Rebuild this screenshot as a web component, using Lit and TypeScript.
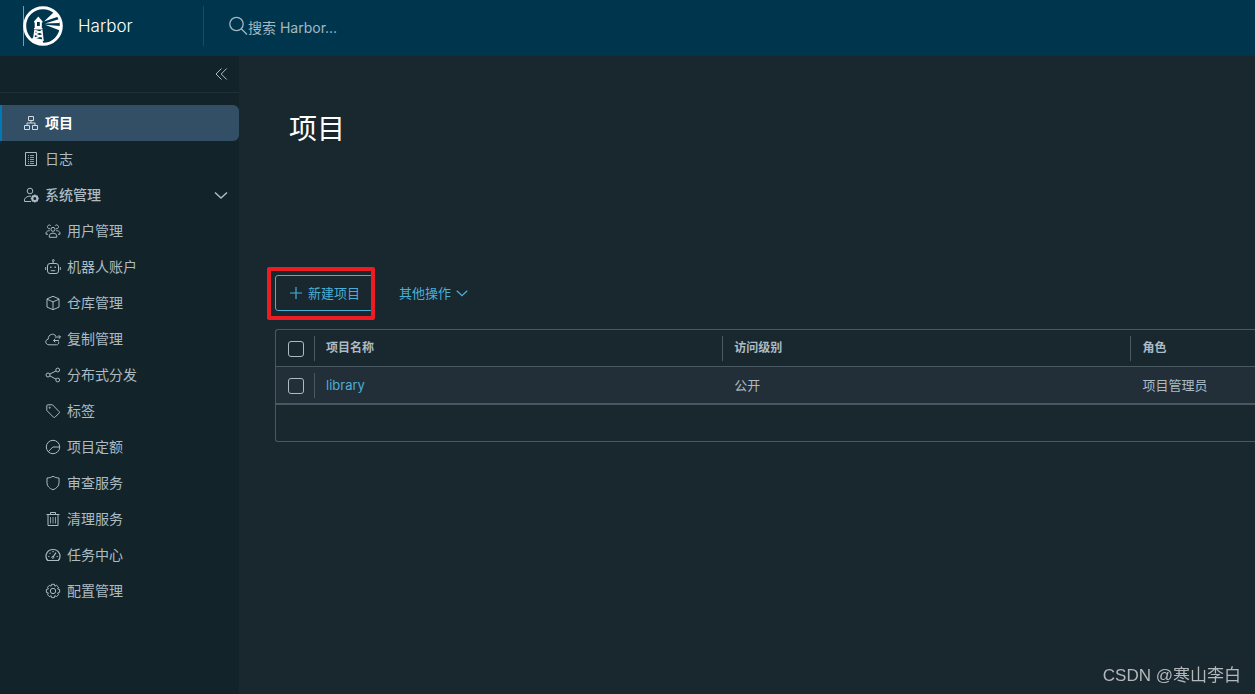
import { LitElement, html, css, svg } from "lit";
import { customElement, state } from "lit/decorators.js";

const icons: Record<string, unknown> = {
  projects: svg`<path d="M5.5 1.5h5v4h-5zM1.500 10.500h5v4h-5zM9.500 10.500h5v4h-5zM8 5.500v2.500M4 10.500V8h8v2.500"/>`,
  logs: svg`<path d="M2.500 1.500h11v13h-11z"/><path d="M5 4.500h1M7 4.500h4M5 6.500h1M7 6.500h4M5 8.500h1M7 8.500h4M5 10.500h1M7 10.500h4M5 12.500h1M7 12.500h4" opacity=".8"/>`,
  admin: svg`<circle cx="7" cy="4" r="2.800"/><path d="M8 14.500H1.500v-2.300c1.200-2.200 3.500-3.300 6.500-3"/><circle cx="11.800" cy="11.500" r="2.500" stroke-width="2"/><path d="M11.800 7.500v1.500M11.800 14v1.500M7.800 11.500h1.500M14.300 11.500h1.500M9 8.700l1 1M13.600 13.300l1 1M14.600 8.700l-1 1M10 13.300l-1 1" stroke-width="1.400"/>`,
  users: svg`<circle cx="8" cy="6.300" r="2"/><path d="M4.300 14.300v-2.200c1.600-2.600 5.800-2.600 7.400 0v2.200zM5 5.700a1.900 1.900 0 1 1 .7-3.200M11 5.700a1.900 1.900 0 1 0-.7-3.200M1 9.800c.6-1.500 2-2.300 3.800-2.100M15 9.800c-.6-1.500-2-2.300-3.800-2.100M1 9.800v1.400h2M15 9.800v1.400h-2"/>`,
  robot: svg`<rect x="2.500" y="4.500" width="11" height="10" rx="2.500"/><path d="M8 4.500V2.300M.7 8v3M15.300 8v3M5.800 11.700h4.400"/><circle cx="8.300" cy="1.500" r=".9"/><path d="M5.200 8.300h1.300M9.500 8.300h1.300" stroke-width="1.500"/>`,
  box: svg`<path d="M8 1.300l6 2.600v8.200l-6 2.600-6-2.600V3.900zM2 4.200l6 2.700 6-2.700M8 6.900v7.600"/>`,
  cloud: svg`<path d="M13.500 10.500c.8 1.800-.4 3.300-2 3.300H4C.1 13.700-.4 8.800 3.200 8.200 3.100 2.900 9 1.800 10.800 5M15.500 6H9.800M13.700 4.200L15.500 6l-1.800 1.800M8.500 9.500h5.300M10.300 7.800L8.500 9.500l1.800 1.800"/>`,
  share: svg`<circle cx="3" cy="8" r="2"/><circle cx="12.700" cy="3" r="1.900"/><circle cx="12.700" cy="13" r="1.900"/><path d="M4.800 7.100l6.200-3.200M4.800 8.900l6.200 3.200"/>`,
  tag: svg`<path d="M1.800 2.800c0-.6.400-1 1-1h4.700l6.700 6.900c.4.400.4.900 0 1.300l-4.300 4.300c-.4.400-.9.400-1.300 0L1.800 7.500z"/><circle cx="4.700" cy="4.700" r=".6"/>`,
  quota: svg`<circle cx="8" cy="8" r="6.700"/><path d="M3.300 12.700L7.800 8h6.900"/>`,
  shield: svg`<path d="M8 1.200c1.600 1.200 3.700 1.700 6 1.800v4.800c0 3.400-2.500 5.500-6 7-3.500-1.500-6-3.600-6-7V3c2.300-.1 4.400-.6 6-1.800z"/>`,
  trash: svg`<path d="M1.500 3.500h13M5.500 3.500v-2h5v2M3 3.500v11h10v-11"/><path d="M5.500 6v6.500M8 6v6.500M10.500 6v6.500" opacity=".8"/>`,
  gauge: svg`<path d="M2.700 13.500C-1.200 8.700 2.200 2.500 8 2.500s9.200 6.200 5.300 11zM8 10l3-4.300M8 4v1.200M3.200 9.500h1.200M4.600 5.800l.9.900M12.800 9.500h-1.200" stroke-width="1.200"/><circle cx="7.800" cy="10.300" r="1"/>`,
  gear: svg`<circle cx="8" cy="8" r="2.700"/><path d="M6.600 1.300h2.800l.5 1.900 1.700-.9 1.900 1.900-.9 1.700 2 .6v2.900l-2 .6.9 1.700-1.900 1.900-1.700-.9-.5 1.900H6.600l-.5-1.900-1.700.9-1.900-1.900.9-1.700-2-.6V6.500l2-.6-.9-1.700 1.900-1.900 1.700.9z" stroke-linejoin="round"/>`,
  chevron: svg`<path d="M2 5.500L8 11l6-5.500" stroke-width="1.500"/>`,
  collapse: svg`<path d="M8.500 2.500L3 8l5.500 5.500M13.700 2.500L8.200 8l5.500 5.500"/>`,
  plus: svg`<path d="M8 2v12M2 8h12" stroke-width="1.200"/>`,
};

const icon = (name: string, size = "") =>
  html`<svg class="icon ${size}" viewBox="0 0 16 16" aria-hidden="true">${icons[name]}</svg>`;

const adminItems = [
  ["users", "用户管理"],
  ["robot", "机器人账户"],
  ["box", "仓库管理"],
  ["cloud", "复制管理"],
  ["share", "分布式分发"],
  ["tag", "标签"],
  ["quota", "项目定额"],
  ["shield", "审查服务"],
  ["trash", "清理服务"],
  ["gauge", "任务中心"],
  ["gear", "配置管理"],
];

const projects = [{ name: "library", access: "公开", role: "项目管理员" }];

@customElement("app-root")
export class AppRoot extends LitElement {
  @state() private adminOpen = true;

  static styles = css`
    :host {
      display: flex;
      flex-direction: column;
      min-height: 100vh;
      background: #19272f;
      color: #adbbc4;
      font: 14px/20px Inter, "Noto Sans CJK SC", sans-serif;
    }
    * { box-sizing: border-box; }
    a { color: inherit; text-decoration: none; }
    button, input { font: inherit; color: inherit; margin: 0; }
    button { background: none; border: 0; padding: 0; cursor: pointer; text-align: left; }
    .icon { flex: none; width: 16px; height: 16px; fill: none; stroke: currentColor; stroke-width: 1; }
    .small { width: 14px; height: 14px; }

    .header {
      display: flex;
      align-items: flex-start;
      height: 56px;
      padding: 6px 24px 0 23px;
      background: #00364d;
    }
    .brand {
      display: flex;
      align-items: center;
      gap: 15px;
      width: 180px;
      height: 40px;
      color: #fff;
      font-size: 17px;
      font-weight: 300;
    }
    .logo { width: 40px; height: 40px; flex: none; box-shadow: inset 1px 0 #49afd9; }
    .search {
      display: flex;
      flex: 1;
      height: 40px;
      padding: 10px 0 0 25px;
      border-left: 1px solid #1d4a5e;
      color: #a3b8c2;
    }
    .glass { width: 19px; height: 19px; flex: none; fill: none; stroke: currentColor; stroke-width: 1.3; }
    .search input {
      flex: 1;
      height: 22px;
      padding: 0;
      border: 0;
      outline: 0;
      background: none;
    }
    .search input::placeholder { color: #a3b8c2; opacity: 1; }

    .body { display: flex; flex: 1; }
    .sidebar { width: 239px; flex: none; background: #12242a; }
    .toggle {
      display: flex;
      justify-content: flex-end;
      align-items: center;
      height: 37px;
      padding-right: 10px;
      border-bottom: 1px solid #222f37;
      margin-bottom: 12px;
    }
    .toggle button { display: flex; }
    .item {
      display: flex;
      align-items: center;
      gap: 6px;
      width: 100%;
      height: 36px;
      padding: 0 10px 0 23px;
    }
    .item .label { flex: 1; }
    .active {
      padding-left: 21px;
      border-left: 2px solid #0079b8;
      border-radius: 0 6px 6px 0;
      background: #324f66;
      color: #fff;
      font-weight: 700;
    }
    .active .icon { color: #d3dce3; }
    .group { font-weight: 500; }
    .sub { padding-left: 45px; }

    .main { flex: 1; min-width: 0; padding: 53px 0 0 36px; }
    h1 {
      margin: 0 0 126px 14px;
      color: #fff;
      font-size: 28px;
      font-weight: 400;
      line-height: 40px;
    }
    .actions { display: flex; align-items: center; gap: 25px; margin-bottom: 18px; color: #49afd9; font-size: 13px; }
    .callout { position: relative; }
    .callout::after {
      content: "";
      position: absolute;
      inset: -8px -1px -9px -8px;
      border: 4px solid #ed1c24;
      border-radius: 2px;
      pointer-events: none;
    }
    .new {
      display: flex;
      align-items: center;
      gap: 4px;
      height: 36px;
      padding: 0 13px 0 12px;
      border: 1px solid #49afd9;
      border-radius: 3px;
    }
    .more { display: flex; align-items: center; gap: 4px; }

    table {
      width: 100%;
      table-layout: fixed;
      border: 1px solid #495961;
      border-right: 0;
      border-radius: 3px 0 0 3px;
      border-spacing: 0;
    }
    .pick { width: 38px; }
    .wide { width: 41.7%; }
    th, td { height: 37px; padding: 0; text-align: left; }
    th { font-size: 12px; font-weight: 700; border-bottom: 1px solid #495961; }
    td { font-size: 13px; background: #232f38; border-bottom: 2px solid #495961; }
    tbody td { height: 38px; }
    .cell { height: 25px; padding-left: 12px; line-height: 24px; }
    .cell.line { padding-left: 11px; border-left: 1px solid #495961; }
    tfoot td { height: 36px; background: none; border: 0; }
    .link { color: #49afd9; }
    input[type="checkbox"] {
      appearance: none;
      display: block;
      width: 16px;
      height: 16px;
      margin: 2px 0 0 12px;
      border: 1px solid #acbac3;
      border-radius: 3px;
    }
    input[type="checkbox"]:checked { background: #49afd9; }
    .watermark {
      position: fixed;
      right: 14px;
      bottom: 6px;
      color: #b3b8bb;
      font: 17px/24px "Liberation Sans", "Noto Sans CJK SC", sans-serif;
    }
  `;

  render() {
    return html`
      <header class="header">
        <a class="brand" href="#">
          <svg class="logo" viewBox="0 0 40 40" aria-hidden="true">
            <circle cx="20" cy="20" r="18.300" fill="none" stroke="#fff" stroke-width="3" />
            <path fill="#fff" d="M11 15.500l4.300-5 4.300 5v1h-.8v5.500h.700v1.500h-8.500v-1.500h.700v-5.500H11zM21 15.500L31 6l4.500 4.500zM22 17.500l14.500-4.500v4zM22 18.800l15 1.200v4.500zM10 31.500l9.500 2 1 5.500-7-1.500-5-4z" />
            <path fill="#00364d" d="M14 16h2.800v4H14z" />
            <path fill="none" stroke="#fff" stroke-width="1.500" d="M12 24.500l7 2.500M19 25l-7.500 3M11.500 28l8 3M19.500 29l-8.500 3.500M12 24l-1.500 10M18.800 24l1.200 11" />
          </svg>
          <span>Harbor</span>
        </a>
        <label class="search">
          <svg class="glass" viewBox="0 0 19 19" aria-hidden="true">
            <circle cx="7.500" cy="8" r="6.700" /><path d="M12.500 13L18 18.500" />
          </svg>
          <input type="text" placeholder="搜索 Harbor..." aria-label="搜索 Harbor..." />
        </label>
      </header>
      <div class="body">
        <nav class="sidebar">
          <div class="toggle"><button aria-label="collapse">${icon("collapse")}</button></div>
          <a class="item active" href="#projects">${icon("projects")}<span class="label">项目</span></a>
          <a class="item" href="#logs">${icon("logs")}<span class="label">日志</span></a>
          <button
            class="item group"
            aria-expanded=${this.adminOpen}
            @click=${() => (this.adminOpen = !this.adminOpen)}
          >
            ${icon("admin")}<span class="label">系统管理</span>${icon("chevron")}
          </button>
          ${this.adminOpen
            ? adminItems.map(
                ([name, label]) => html`<a class="item sub" href="#${name}">${icon(name)}<span class="label">${label}</span></a>`
              )
            : ""}
        </nav>
        <main class="main">
          <h1>项目</h1>
          <div class="actions">
            <div class="callout"><button class="new">${icon("plus")}新建项目</button></div>
            <button class="more">其他操作${icon("chevron", "small")}</button>
          </div>
          <table>
            <colgroup><col class="pick" /><col class="wide" /><col class="wide" /><col /></colgroup>
            <thead>
              <tr>
                <th><input type="checkbox" aria-label="全选" /></th>
                <th><div class="cell line">项目名称</div></th>
                <th><div class="cell line">访问级别</div></th>
                <th><div class="cell line">角色</div></th>
              </tr>
            </thead>
            <tbody>
              ${projects.map(
                (p) => html`<tr>
                  <td><input type="checkbox" aria-label=${p.name} /></td>
                  <td><div class="cell line"><a class="link" href="#library">${p.name}</a></div></td>
                  <td><div class="cell">${p.access}</div></td>
                  <td><div class="cell">${p.role}</div></td>
                </tr>`
              )}
            </tbody>
            <tfoot><tr><td colspan="4"></td></tr></tfoot>
          </table>
        </main>
      </div>
      <div class="watermark">CSDN @寒山李白</div>
    `;
  }
}
